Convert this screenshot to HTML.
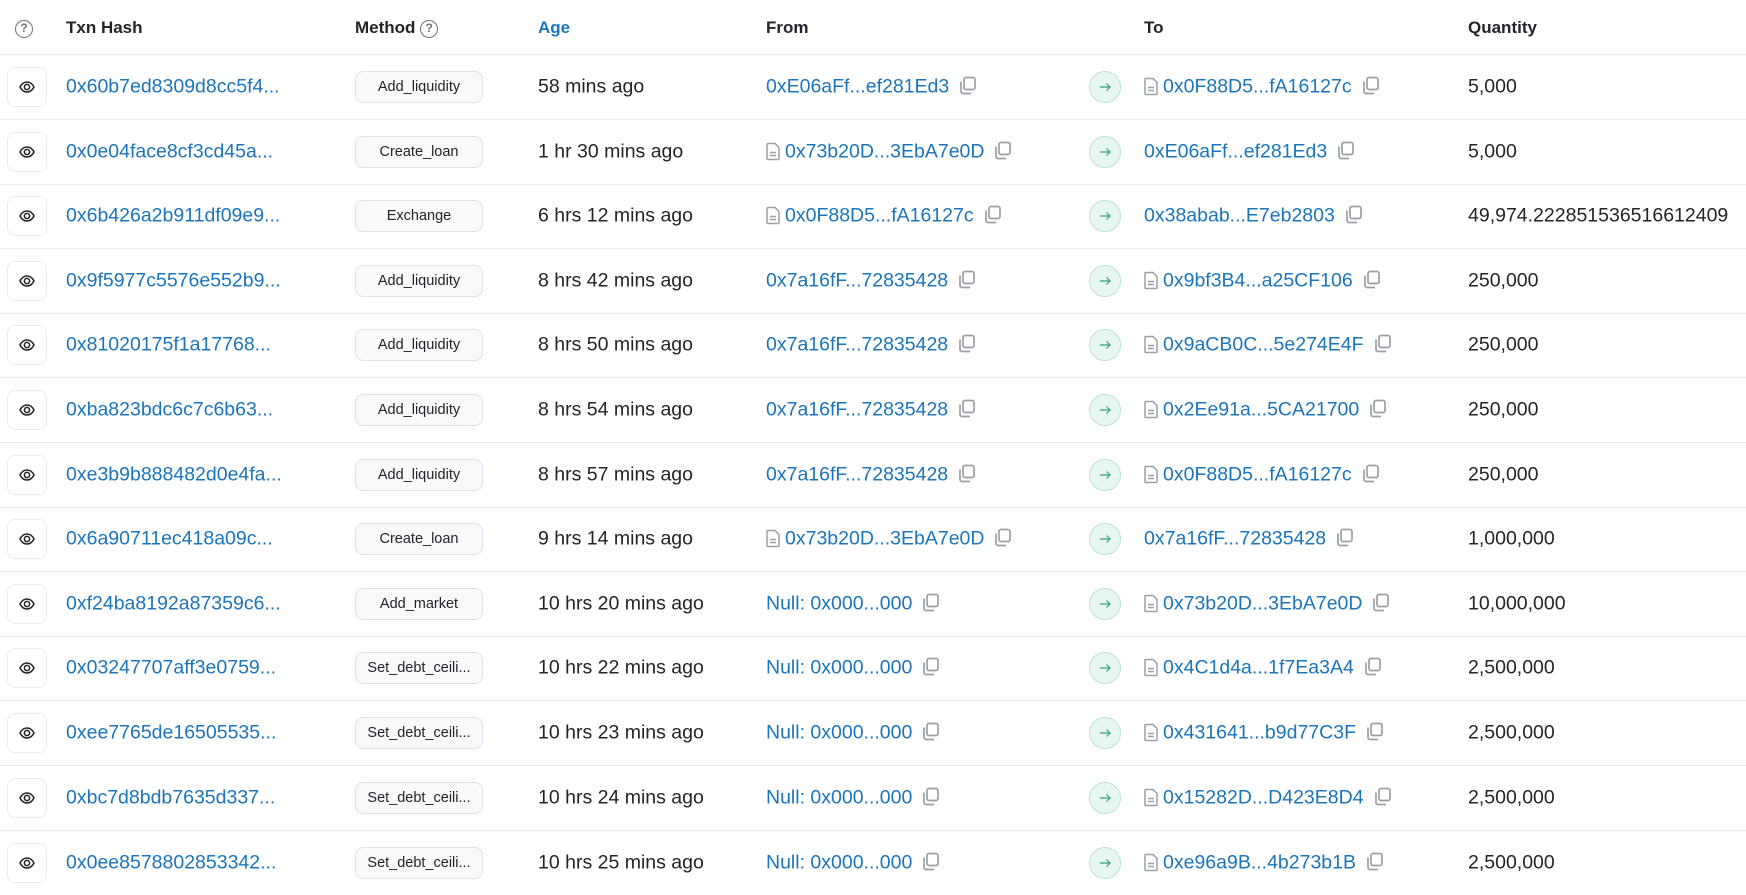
<!DOCTYPE html>
<html><head><meta charset="utf-8"><style>
*{box-sizing:border-box;margin:0;padding:0}
body{width:1746px;height:888px;overflow:hidden;background:#fff;font-family:"Liberation Sans",Arial,sans-serif;color:#212529;position:relative}
.hd{position:absolute;top:0;left:0;width:1746px;height:55px;border-bottom:1px solid #e9ecef}
.hd span{position:absolute;top:18px;font-weight:bold;font-size:17px;color:#212529;white-space:nowrap}
.q{display:inline-block;width:18px;height:18px;border:1.5px solid #6c757d;border-radius:50%;font-size:12px;line-height:15px;text-align:center;color:#6c757d;font-weight:bold;font-style:normal;vertical-align:1px}
.r{position:absolute;left:0;width:1746px;height:65px;border-bottom:1px solid #e9ecef}
.r>*{position:absolute;top:50%;transform:translateY(-50%)}
.eye{left:7px;width:40px;height:40px;border:1px solid #e9ecef;border-radius:8px;display:flex;align-items:center;justify-content:center}
.h{left:66px;font-size:19.5px;color:#1b75bb}
.m{left:355px;width:128px;height:32px;background:#f8f9fa;border:1px solid #dee2e6;border-radius:8px;font-size:14.5px;text-align:center;line-height:30px;color:#212529}
.a{left:538px;font-size:19.5px}
.f{left:766px;font-size:19.5px;color:#1b75bb;white-space:nowrap}
.ar{left:1089px;width:32px;height:32px;border-radius:50%;background:#e8f6f2;border:1px solid #b9e3d5;display:flex;align-items:center;justify-content:center}
.t{left:1144px;font-size:19.5px;color:#1b75bb;white-space:nowrap}
.qt{left:1468px;font-size:19.5px}
.doc,.cp{display:inline-block;vertical-align:-3px}
.doc{margin-right:5px}
.cp{margin-left:8px}
</style></head><body>
<svg width="0" height="0" style="position:absolute">
<symbol id="eye" viewBox="0 0 16 16"><path d="M1 8c2-4 5-5 7-5s5 1 7 5c-2 4-5 5-7 5S3 12 1 8z" fill="none" stroke="#212529" stroke-width="1.5"/><circle cx="8" cy="8" r="2.6" fill="none" stroke="#212529" stroke-width="1.5"/></symbol>
<symbol id="doc" viewBox="0 0 14 18"><path d="M2 1h7l4 4v11a1 1 0 0 1-1 1H2a1 1 0 0 1-1-1V2a1 1 0 0 1 1-1z" fill="none" stroke="#9aa0a6" stroke-width="1.5"/><path d="M4 10h6M4 13h6" stroke="#9aa0a6" stroke-width="1.4"/></symbol>
<symbol id="cp" viewBox="0 0 20 20"><rect x="7" y="2" width="11" height="12" rx="2" fill="none" stroke="#9aa0a6" stroke-width="1.7"/><path d="M4 6v10a2 2 0 0 0 2 2h8" fill="none" stroke="#9aa0a6" stroke-width="1.7"/></symbol>
<symbol id="arr" viewBox="0 0 16 16"><path d="M3 8h10M9.5 4.5 13 8l-3.5 3.5" fill="none" stroke="#2fa57f" stroke-width="1.2"/></symbol>
</svg>
<div class="hd">
<span style="left:15px"><i class="q">?</i></span>
<span style="left:66px">Txn Hash</span>
<span style="left:355px">Method <i class="q">?</i></span>
<span style="left:538px;color:#1b75bb">Age</span>
<span style="left:766px">From</span>
<span style="left:1144px">To</span>
<span style="left:1468px">Quantity</span>
</div>

<div class="r" style="top:55px"><div class="eye"><svg width="16" height="16"><use href="#eye"/></svg></div><div class="h">0x60b7ed8309d8cc5f4...</div><div class="m">Add_liquidity</div><div class="a">58 mins ago</div><div class="f">0xE06aFf...ef281Ed3<svg class="cp" width="20" height="20"><use href="#cp"/></svg></div><div class="ar"><svg width="16" height="16"><use href="#arr"/></svg></div><div class="t"><svg class="doc" width="14" height="18"><use href="#doc"/></svg>0x0F88D5...fA16127c<svg class="cp" width="20" height="20"><use href="#cp"/></svg></div><div class="qt">5,000</div></div>

<div class="r" style="top:119.6px"><div class="eye"><svg width="16" height="16"><use href="#eye"/></svg></div><div class="h">0x0e04face8cf3cd45a...</div><div class="m">Create_loan</div><div class="a">1 hr 30 mins ago</div><div class="f"><svg class="doc" width="14" height="18"><use href="#doc"/></svg>0x73b20D...3EbA7e0D<svg class="cp" width="20" height="20"><use href="#cp"/></svg></div><div class="ar"><svg width="16" height="16"><use href="#arr"/></svg></div><div class="t">0xE06aFf...ef281Ed3<svg class="cp" width="20" height="20"><use href="#cp"/></svg></div><div class="qt">5,000</div></div>

<div class="r" style="top:184.2px"><div class="eye"><svg width="16" height="16"><use href="#eye"/></svg></div><div class="h">0x6b426a2b911df09e9...</div><div class="m">Exchange</div><div class="a">6 hrs 12 mins ago</div><div class="f"><svg class="doc" width="14" height="18"><use href="#doc"/></svg>0x0F88D5...fA16127c<svg class="cp" width="20" height="20"><use href="#cp"/></svg></div><div class="ar"><svg width="16" height="16"><use href="#arr"/></svg></div><div class="t">0x38abab...E7eb2803<svg class="cp" width="20" height="20"><use href="#cp"/></svg></div><div class="qt">49,974.222851536516612409</div></div>

<div class="r" style="top:248.8px"><div class="eye"><svg width="16" height="16"><use href="#eye"/></svg></div><div class="h">0x9f5977c5576e552b9...</div><div class="m">Add_liquidity</div><div class="a">8 hrs 42 mins ago</div><div class="f">0x7a16fF...72835428<svg class="cp" width="20" height="20"><use href="#cp"/></svg></div><div class="ar"><svg width="16" height="16"><use href="#arr"/></svg></div><div class="t"><svg class="doc" width="14" height="18"><use href="#doc"/></svg>0x9bf3B4...a25CF106<svg class="cp" width="20" height="20"><use href="#cp"/></svg></div><div class="qt">250,000</div></div>

<div class="r" style="top:313.4px"><div class="eye"><svg width="16" height="16"><use href="#eye"/></svg></div><div class="h">0x81020175f1a17768...</div><div class="m">Add_liquidity</div><div class="a">8 hrs 50 mins ago</div><div class="f">0x7a16fF...72835428<svg class="cp" width="20" height="20"><use href="#cp"/></svg></div><div class="ar"><svg width="16" height="16"><use href="#arr"/></svg></div><div class="t"><svg class="doc" width="14" height="18"><use href="#doc"/></svg>0x9aCB0C...5e274E4F<svg class="cp" width="20" height="20"><use href="#cp"/></svg></div><div class="qt">250,000</div></div>

<div class="r" style="top:378px"><div class="eye"><svg width="16" height="16"><use href="#eye"/></svg></div><div class="h">0xba823bdc6c7c6b63...</div><div class="m">Add_liquidity</div><div class="a">8 hrs 54 mins ago</div><div class="f">0x7a16fF...72835428<svg class="cp" width="20" height="20"><use href="#cp"/></svg></div><div class="ar"><svg width="16" height="16"><use href="#arr"/></svg></div><div class="t"><svg class="doc" width="14" height="18"><use href="#doc"/></svg>0x2Ee91a...5CA21700<svg class="cp" width="20" height="20"><use href="#cp"/></svg></div><div class="qt">250,000</div></div>

<div class="r" style="top:442.6px"><div class="eye"><svg width="16" height="16"><use href="#eye"/></svg></div><div class="h">0xe3b9b888482d0e4fa...</div><div class="m">Add_liquidity</div><div class="a">8 hrs 57 mins ago</div><div class="f">0x7a16fF...72835428<svg class="cp" width="20" height="20"><use href="#cp"/></svg></div><div class="ar"><svg width="16" height="16"><use href="#arr"/></svg></div><div class="t"><svg class="doc" width="14" height="18"><use href="#doc"/></svg>0x0F88D5...fA16127c<svg class="cp" width="20" height="20"><use href="#cp"/></svg></div><div class="qt">250,000</div></div>

<div class="r" style="top:507.2px"><div class="eye"><svg width="16" height="16"><use href="#eye"/></svg></div><div class="h">0x6a90711ec418a09c...</div><div class="m">Create_loan</div><div class="a">9 hrs 14 mins ago</div><div class="f"><svg class="doc" width="14" height="18"><use href="#doc"/></svg>0x73b20D...3EbA7e0D<svg class="cp" width="20" height="20"><use href="#cp"/></svg></div><div class="ar"><svg width="16" height="16"><use href="#arr"/></svg></div><div class="t">0x7a16fF...72835428<svg class="cp" width="20" height="20"><use href="#cp"/></svg></div><div class="qt">1,000,000</div></div>

<div class="r" style="top:571.8px"><div class="eye"><svg width="16" height="16"><use href="#eye"/></svg></div><div class="h">0xf24ba8192a87359c6...</div><div class="m">Add_market</div><div class="a">10 hrs 20 mins ago</div><div class="f">Null: 0x000...000<svg class="cp" width="20" height="20"><use href="#cp"/></svg></div><div class="ar"><svg width="16" height="16"><use href="#arr"/></svg></div><div class="t"><svg class="doc" width="14" height="18"><use href="#doc"/></svg>0x73b20D...3EbA7e0D<svg class="cp" width="20" height="20"><use href="#cp"/></svg></div><div class="qt">10,000,000</div></div>

<div class="r" style="top:636.4px"><div class="eye"><svg width="16" height="16"><use href="#eye"/></svg></div><div class="h">0x03247707aff3e0759...</div><div class="m">Set_debt_ceili...</div><div class="a">10 hrs 22 mins ago</div><div class="f">Null: 0x000...000<svg class="cp" width="20" height="20"><use href="#cp"/></svg></div><div class="ar"><svg width="16" height="16"><use href="#arr"/></svg></div><div class="t"><svg class="doc" width="14" height="18"><use href="#doc"/></svg>0x4C1d4a...1f7Ea3A4<svg class="cp" width="20" height="20"><use href="#cp"/></svg></div><div class="qt">2,500,000</div></div>

<div class="r" style="top:701px"><div class="eye"><svg width="16" height="16"><use href="#eye"/></svg></div><div class="h">0xee7765de16505535...</div><div class="m">Set_debt_ceili...</div><div class="a">10 hrs 23 mins ago</div><div class="f">Null: 0x000...000<svg class="cp" width="20" height="20"><use href="#cp"/></svg></div><div class="ar"><svg width="16" height="16"><use href="#arr"/></svg></div><div class="t"><svg class="doc" width="14" height="18"><use href="#doc"/></svg>0x431641...b9d77C3F<svg class="cp" width="20" height="20"><use href="#cp"/></svg></div><div class="qt">2,500,000</div></div>

<div class="r" style="top:765.6px"><div class="eye"><svg width="16" height="16"><use href="#eye"/></svg></div><div class="h">0xbc7d8bdb7635d337...</div><div class="m">Set_debt_ceili...</div><div class="a">10 hrs 24 mins ago</div><div class="f">Null: 0x000...000<svg class="cp" width="20" height="20"><use href="#cp"/></svg></div><div class="ar"><svg width="16" height="16"><use href="#arr"/></svg></div><div class="t"><svg class="doc" width="14" height="18"><use href="#doc"/></svg>0x15282D...D423E8D4<svg class="cp" width="20" height="20"><use href="#cp"/></svg></div><div class="qt">2,500,000</div></div>

<div class="r" style="top:830.2px;border-bottom:none"><div class="eye"><svg width="16" height="16"><use href="#eye"/></svg></div><div class="h">0x0ee8578802853342...</div><div class="m">Set_debt_ceili...</div><div class="a">10 hrs 25 mins ago</div><div class="f">Null: 0x000...000<svg class="cp" width="20" height="20"><use href="#cp"/></svg></div><div class="ar"><svg width="16" height="16"><use href="#arr"/></svg></div><div class="t"><svg class="doc" width="14" height="18"><use href="#doc"/></svg>0xe96a9B...4b273b1B<svg class="cp" width="20" height="20"><use href="#cp"/></svg></div><div class="qt">2,500,000</div></div>
</body></html>
